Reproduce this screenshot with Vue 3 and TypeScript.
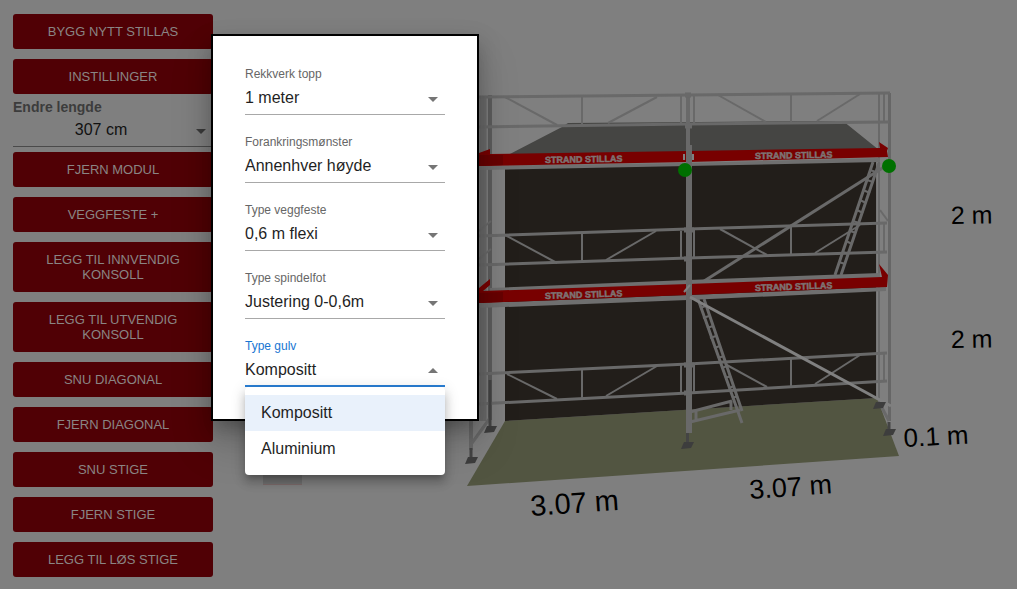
<script setup lang="ts">
import { ref } from 'vue'

type Line = [number, number, number, number]

interface Field {
  id: string
  label: string
  value: string
  options: string[]
}

const topActions: string[] = ['Bygg nytt stillas', 'Instillinger']
const actions: string[] = [
  'Fjern modul',
  'Veggfeste +',
  'Legg til innvendig konsoll',
  'Legg til utvendig konsoll',
  'Snu diagonal',
  'Fjern diagonal',
  'Snu stige',
  'Fjern stige',
  'Legg til løs stige',
]

const length = ref('307 cm')
const lengths: string[] = ['157 cm', '207 cm', '257 cm', '307 cm']

const fields = ref<Field[]>([
  { id: 'rekkverk', label: 'Rekkverk topp', value: '1 meter', options: ['0,5 meter', '1 meter'] },
  { id: 'forankring', label: 'Forankringsmønster', value: 'Annenhver høyde', options: ['Annenhver høyde', 'Hver høyde'] },
  { id: 'veggfeste', label: 'Type veggfeste', value: '0,6 m flexi', options: ['0,6 m flexi', '1 m flexi'] },
  { id: 'spindelfot', label: 'Type spindelfot', value: 'Justering 0-0,6m', options: ['Justering 0-0,6m'] },
  { id: 'gulv', label: 'Type gulv', value: 'Kompositt', options: ['Kompositt', 'Aluminium'] },
])
const openId = ref('gulv')

function choose(field: Field, option: string): void {
  field.value = option
  openId.value = ''
}

const rails: Line[] = [
  [479, 97, 688, 95], [688, 95, 890, 93],
  [479, 127, 688, 124], [688, 124, 889, 122],
  [479, 236, 688, 229], [688, 229, 887, 223],
  [479, 265, 688, 258], [688, 258, 887, 252],
  [479, 374, 688, 364], [688, 364, 887, 353],
  [479, 404, 688, 393], [688, 393, 887, 381],
]

const braces: Line[] = [
  [505, 97, 557, 125], [657, 97, 608, 123], [582, 96, 582, 125],
  [718, 95, 766, 122], [860, 94, 817, 121], [791, 94, 791, 122],
  [505, 235, 557, 263], [656, 231, 606, 260], [582, 233, 582, 262],
  [720, 229, 767, 255], [860, 225, 815, 253], [791, 226, 791, 255],
  [507, 374, 557, 399], [657, 366, 606, 396], [582, 369, 582, 398],
  [725, 364, 767, 387], [860, 355, 815, 384], [791, 358, 791, 387],
  [681, 96, 681, 124], [694, 96, 694, 123], [884, 94, 884, 121],
  [681, 231, 681, 258], [694, 230, 694, 257], [884, 224, 884, 251],
  [681, 365, 681, 393], [694, 365, 694, 392], [884, 354, 884, 381],
  [880, 210, 888, 221], [479, 231, 491, 221], [479, 259, 491, 249],
]

const rungs: Line[] = [
  [870, 170, 876, 172], [867, 180, 873, 182], [863, 190, 870, 193],
  [860, 200, 866, 203], [857, 210, 863, 213], [853, 221, 859, 223],
  [850, 231, 856, 233], [846, 241, 852, 244], [843, 252, 848, 254],
  [839, 262, 845, 264],
  [700, 308, 706, 306], [703, 318, 709, 316], [707, 328, 713, 326],
  [710, 338, 716, 336], [714, 348, 720, 346], [718, 358, 724, 356],
  [722, 368, 727, 366], [725, 378, 731, 376], [729, 388, 734, 386],
  [732, 398, 738, 396],
]

const feet: [number, number][] = [[471, 461], [490, 430], [687, 446], [879, 406], [889, 433]]
</script>

<template>
  <div class="page">
    <nav class="sidebar" aria-label="Stillas">
      <button v-for="a in topActions" :key="a" type="button" class="action">{{ a }}</button>
      <div class="field sidebar-field">
        <label for="lengde" class="strong">Endre lengde</label>
        <div class="control">
          <select id="lengde" v-model="length">
            <option v-for="l in lengths" :key="l">{{ l }}</option>
          </select>
          <svg class="arrow" viewBox="0 0 24 24" aria-hidden="true"><path d="M7 10l5 5 5-5z" /></svg>
        </div>
      </div>
      <button v-for="a in actions" :key="a" type="button" class="action">{{ a }}</button>
    </nav>

    <main class="scene">
      <svg class="canvas" viewBox="213 0 804 589" role="img" aria-label="Stillas, to fag og to høyder">
        <rect x="263" y="470" width="39" height="15" fill="#707070" />
        <path d="M263 484.500H302" stroke="#7c6a6a" />

        <polygon points="505,421 877,398 899,456 467,486" fill="#525541" />
        <polygon points="505,168 877,160 877,398 505,421" fill="#221e1a" />
        <polygon points="508,155 562,127 568,123 843,121 879,150" fill="#454543" />

        <g class="steel">
          <path d="M483 97V421" stroke="#6b6b6b" stroke-width="7" />
          <path d="M490 95V420" stroke="#5d5d5d" stroke-width="4" />
          <path d="M879 92V402" stroke-width="2" />
          <path d="M876.500 162V399" stroke="#777" stroke-width="1" />
          <path d="M889.500 93V421" stroke="#666" stroke-width="3" />
          <path d="M471 420V450" stroke-width="4" />
          <path d="M490 418L472 443M880 404L889 421" stroke-width="3" />
        </g>

        <g class="steel" stroke-width="2">
          <line v-for="(l, i) in braces" :key="i" :x1="l[0]" :y1="l[1]" :x2="l[2]" :y2="l[3]" />
        </g>
        <g class="steel" stroke-width="3">
          <line v-for="(l, i) in rails" :key="i" :x1="l[0]" :y1="l[1]" :x2="l[2]" :y2="l[3]" />
        </g>

        <g class="steel" stroke-width="3">
          <path d="M873 162L835 275M879 163L841 275" />
          <path d="M698 299L742 423M704 299L742 411" />
          <line v-for="(l, i) in rungs" :key="i" :x1="l[0]" :y1="l[1]" :x2="l[2]" :y2="l[3]" stroke-width="2" />
          <path d="M690 412L732 401M690 422L740 410M731 401V410M696 410V420" />
          <path d="M884 167L690 290" />
        </g>

        <g fill="#6f6f6f">
          <polygon points="479,166 688,163 880,158 880,162 688,166 479,170" />
          <polygon points="490,288 688,280 880,273 880,278 688,285 490,292" />
          <polygon points="479,303 688,295 886,287 886,291 688,300 479,308" />
        </g>
        <g fill="#780000">
          <polygon points="479,153 490,149 490,154 688,151 880,148 879,142 888,148 887,151 888,157 688,162 479,166" />
          <polygon points="479,288 490,279 490,285 483,291 688,284 882,277 879,264 888,275 887,287 688,295 479,303" />
        </g>
        <polygon points="479,155 503,155 503,165 479,166" fill="#680000" />
        <polygon points="479,293 503,292 503,302 479,303" fill="#680000" />

        <g class="brand">
          <text x="545" y="163" transform="rotate(-1 545 163)">STRAND STILLAS</text>
          <text x="755" y="159" transform="rotate(-1 755 159)">STRAND STILLAS</text>
          <text x="545" y="299" transform="rotate(-2 545 299)">STRAND STILLAS</text>
          <text x="755" y="291" transform="rotate(-2 755 291)">STRAND STILLAS</text>
        </g>

        <g class="steel">
          <path d="M688 93V145" stroke-width="4" />
          <path d="M689 145V433" stroke-width="6" />
          <path d="M685 95H691M685 126H692M684 230H694M684 259H692M684 365H694M684 393H692" stroke-width="5" />
          <path d="M684 292L690 285M684 154V160M693 154V160" stroke="#808080" stroke-width="2" />
          <path d="M690 297L891 406" stroke="#808080" stroke-width="3" />
        </g>

        <g stroke="#444" stroke-width="3">
          <path d="M471 448V461M490 380V430M687.500 433V446M889 422V433" />
        </g>
        <g fill="#3d3d3d">
          <polygon
            v-for="f in feet"
            :key="f[0]"
            :points="`${f[0] - 3},${f[1] - 4} ${f[0] + 7},${f[1] - 4} ${f[0] + 4},${f[1] + 2} ${f[0] - 6},${f[1] + 3}`"
          />
        </g>

        <circle cx="685" cy="170" r="7" fill="#007000" />
        <circle cx="889" cy="166" r="7" fill="#007000" />

        <g class="measure">
          <text x="951" y="224" font-size="25" transform="rotate(-1 951 224)">2 m</text>
          <text x="951" y="348" font-size="25" transform="rotate(-1 951 348)">2 m</text>
          <text x="904" y="447" font-size="26" transform="rotate(-3 904 447)">0.1 m</text>
          <text x="531" y="516" font-size="29" transform="rotate(-4 531 516)">3.07 m</text>
          <text x="750" y="499" font-size="27" transform="rotate(-4 750 499)">3.07 m</text>
        </g>
      </svg>
    </main>

    <section class="dialog" role="dialog" aria-label="Instillinger">
      <div v-for="f in fields" :key="f.id" class="field" :class="{ open: openId === f.id }">
        <label :for="f.id">{{ f.label }}</label>
        <div class="control">
          <select :id="f.id" v-model="f.value">
            <option v-for="o in f.options" :key="o">{{ o }}</option>
          </select>
          <svg class="arrow" viewBox="0 0 24 24" aria-hidden="true"><path d="M7 10l5 5 5-5z" /></svg>
        </div>
        <div v-if="openId === f.id" class="menu" role="listbox" :aria-label="f.label">
          <button
            v-for="o in f.options"
            :key="o"
            type="button"
            role="option"
            :aria-selected="o === f.value"
            :class="{ selected: o === f.value }"
            @click="choose(f, o)"
          >
            {{ o }}
          </button>
        </div>
      </div>
    </section>
  </div>
</template>

<style>
body {
  margin: 0;
  background: #7f7f7f;
}
</style>

<style scoped>
.page {
  position: relative;
  display: flex;
  min-height: 100vh;
  background: #7f7f7f;
  color: #1f1f1f;
  font-family: "Liberation Sans", Arial, sans-serif;
}

.page * {
  box-sizing: border-box;
}

.sidebar {
  flex: none;
  display: flex;
  flex-direction: column;
  gap: 10px;
  width: 213px;
  padding: 14px 0 12px 13px;
}

.action {
  min-height: 35px;
  padding: 10px 30px;
  border: 0;
  border-radius: 3px;
  background: #500005;
  color: #8a8584;
  font: 13px/15px "Liberation Sans", Arial, sans-serif;
  text-transform: uppercase;
}

.field {
  position: relative;
  display: flex;
  flex-direction: column;
}

.field label {
  padding-bottom: 2px;
  color: #666;
  font-size: 12px;
  line-height: 14px;
}

.control {
  position: relative;
}

.control select {
  display: block;
  width: 100%;
  height: 32px;
  padding: 0 24px 2px 0;
  border: 0;
  border-bottom: 1px solid #a8a8a8;
  border-radius: 0;
  outline: 0;
  appearance: none;
  background: transparent;
  color: #1f1f1f;
  font: 16px/24px "Liberation Sans", Arial, sans-serif;
}

.arrow {
  position: absolute;
  top: 4px;
  right: 0;
  width: 24px;
  height: 24px;
  fill: #757575;
  pointer-events: none;
}

.sidebar-field {
  margin: -5px 0;
}

.sidebar-field .strong {
  padding: 0;
  color: #3c3c3c;
  font-size: 14px;
  font-weight: bold;
  line-height: 16px;
}

.sidebar-field select {
  border-color: #4a4a4a;
  color: #111;
  text-align-last: center;
}

.sidebar-field .arrow {
  fill: #3a3a3a;
}

.scene {
  flex: 1;
  min-width: 0;
  display: flex;
}

.canvas {
  display: block;
  width: 100%;
  height: 100vh;
}

.steel {
  fill: none;
  stroke: #696969;
}

.brand text {
  fill: #7d7474;
  stroke: #7d7474;
  stroke-width: 0.5px;
  font-size: 9px;
  font-weight: bold;
}

.measure text {
  fill: #000;
}

.dialog {
  position: absolute;
  top: 34px;
  left: 211px;
  display: flex;
  flex-direction: column;
  gap: 20px;
  width: 268px;
  padding: 31px 32px 32px;
  border: 2px solid #000;
  background: #fff;
  box-shadow:
    0 11px 15px -7px rgba(0, 0, 0, 0.2),
    0 24px 38px 3px rgba(0, 0, 0, 0.14),
    0 9px 20px 4px rgba(0, 0, 0, 0.12);
}

.open label {
  color: #1976d2;
}

.open select {
  padding-bottom: 0;
  border-bottom: 2px solid #2a7fd5;
}

.open .arrow {
  transform: rotate(180deg);
}

.menu {
  position: absolute;
  top: 100%;
  left: 0;
  right: 0;
  display: flex;
  flex-direction: column;
  padding: 8px 0;
  border-radius: 4px;
  background: #fff;
  box-shadow:
    0 5px 5px -3px rgba(0, 0, 0, 0.2),
    0 8px 10px 1px rgba(0, 0, 0, 0.14),
    0 3px 14px 2px rgba(0, 0, 0, 0.12);
}

.menu button {
  height: 36px;
  padding: 0 16px;
  border: 0;
  background: transparent;
  color: #1f1f1f;
  font: 16px/24px "Liberation Sans", Arial, sans-serif;
  text-align: left;
}

.menu .selected {
  background: #e9f1fb;
}
</style>
